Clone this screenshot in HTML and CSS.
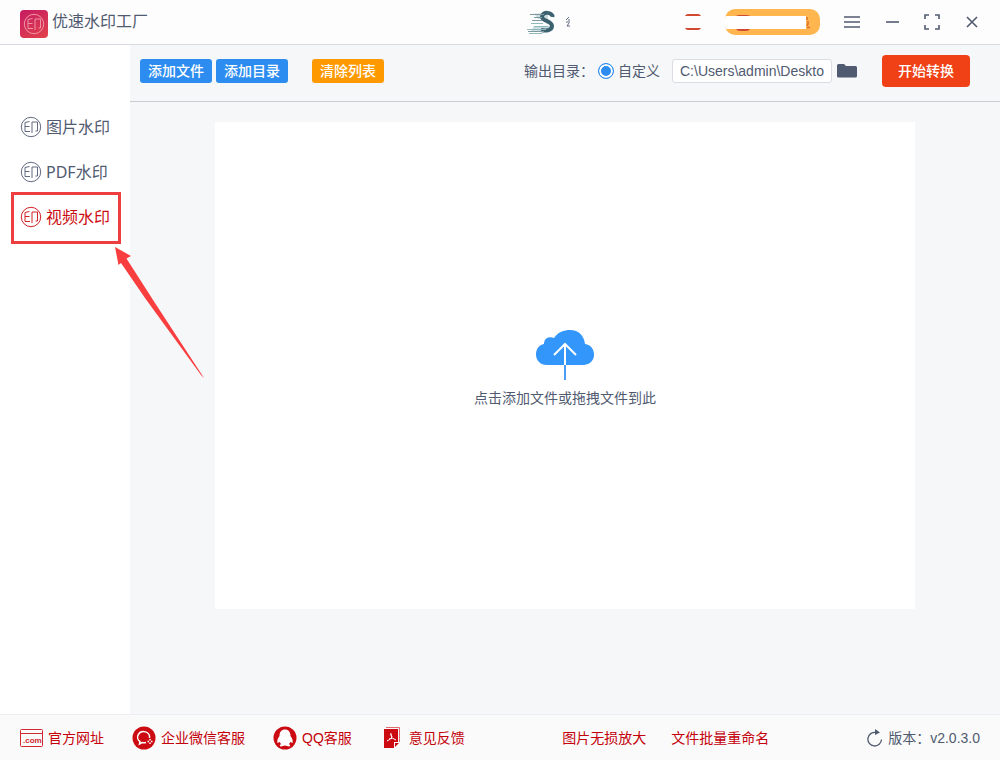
FILE: index.html
```
<!DOCTYPE html>
<html lang="zh-CN">
<head>
<meta charset="utf-8">
<meta name="viewport" content="width=device-width, initial-scale=1">
<title>优速水印工厂</title>
<link rel="stylesheet" href="styles.css">
</head>
<body>
<svg class="defs" aria-hidden="true">
  <symbol id="stamp" viewBox="0 0 22 22">
    <g fill="none" stroke="currentColor" stroke-width=".9">
      <circle cx="11" cy="11" r="9.700"/>
      <path d="M9.500 5.500 5 6.500V15.500H10M5 10.500H9.500M12 17V6H17.500V15H15.500"/>
    </g>
  </symbol>
</svg>
<div class="app">
  <header class="titlebar">
    <span class="logo"><svg viewBox="0 0 22 22"><use href="#stamp"/></svg></span>
    <h1 class="title">优速水印工厂</h1>
    <div class="account">
      <svg class="avatar" viewBox="0 0 30 24" aria-hidden="true">
        <path d="M8 3.500H22V9H12ZM8 16H24V21H5Z" fill="#a9c6ca" opacity=".6"/>
        <path d="M26.500 7C27 2 16 1 16 7c0 4 10 4 10 9 0 5-7 5-11 4" fill="none" stroke="#3c6270" stroke-width="4"/>
        <path d="M4 4.500H18M8 7.500H16M6 10.500H16M2 21.500H18" stroke="#7f98a2" stroke-width="1"/>
        <path d="M5 13.500H17M8 16.500H22M1 19.500H20M3 23.500H16" stroke="#8fb9bd" stroke-width="1"/>
      </svg>
      <svg class="fragment" viewBox="0 0 6 12" aria-hidden="true"><path d="M4 1 1 4M3 4H5M1 6H5M4 7 2 10H5" fill="none" stroke="#626b80"/></svg>
      <svg class="badge" viewBox="0 0 16 16" aria-hidden="true"><path d="M0 2Q1 0 3 0H13Q15 0 16 2ZM0 14H16Q15 16 13 16H3Q1 16 0 14Z" fill="#d14a30"/></svg>
      <button class="vip" type="button" aria-label="会员">
        <svg viewBox="0 0 95 26" aria-hidden="true">
          <path d="M11 7Q12 6 15 6H21Q24 6 25 7V20Q24 22 21 22H15Q12 22 11 20Z" fill="#d14a30"/>
          <path d="M0 7H81V20H0Z" fill="#fff"/>
          <path d="M82 8V11M83 12V15L82 17M82 18.500H85" fill="none" stroke="#e36c2f" stroke-width="1.500"/>
        </svg>
      </button>
    </div>
    <div class="window-buttons">
      <button type="button" aria-label="菜单"><svg viewBox="0 0 16 16"><path d="M0 3H16M0 8H16M0 13H16"/></svg></button>
      <button type="button" aria-label="最小化"><svg viewBox="0 0 16 16"><path d="M2 8H15"/></svg></button>
      <button type="button" aria-label="最大化"><svg viewBox="0 0 16 16"><path d="M1 5V1H5M11 1H15V5M15 11V15H11M5 15H1V11"/></svg></button>
      <button type="button" aria-label="关闭"><svg viewBox="0 0 16 16"><path d="M3 3 13 13M13 3 3 13"/></svg></button>
    </div>
  </header>

  <nav class="sidebar">
    <a class="nav-item" href="#image"><svg><use href="#stamp"/></svg>图片水印</a>
    <a class="nav-item" href="#pdf"><svg><use href="#stamp"/></svg>PDF水印</a>
    <a class="nav-item active" href="#video"><svg><use href="#stamp"/></svg>视频水印</a>
    <span class="highlight"></span>
    <svg class="arrow" viewBox="0 0 90 132" aria-hidden="true"><path d="M0 0 16 9 11.500 11.500 15 17 40 56 89 131 86 128 30 51 6 16 3.500 18Z" fill="#f93e40"/></svg>
  </nav>

  <main class="content">
    <div class="toolbar">
      <button class="btn blue" type="button">添加文件</button>
      <button class="btn blue" type="button">添加目录</button>
      <button class="btn orange" type="button">清除列表</button>
      <div class="output">
        <span class="output-label">输出目录：</span>
        <input class="radio" type="radio" id="custom" name="output" checked>
        <label for="custom">自定义</label>
        <input class="path" type="text" aria-label="输出路径" value="C:\Users\admin\Deskto">
        <button class="folder" type="button" aria-label="选择目录"><svg viewBox="0 0 20 14"><path d="M0 1.500Q0 0 1.500 0H7L9 2H18.500Q20 2 20 3.500V12Q20 13.500 18.500 13.500H1.500Q0 13.500 0 12Z" fill="#505a70"/></svg></button>
      </div>
      <button class="btn start" type="button">开始转换</button>
    </div>
    <button class="dropzone" type="button">
      <svg class="cloud" viewBox="0 0 58 50" aria-hidden="true">
        <path d="M11 35C4 35 0 30 0 24.500 0 19 3 15 8 14 8 9 12 6 18 8 22 2 28 0 34 0 43 0 48 6 49 14 55 15 58 19 58 25 58 31 53 35 47 35Z" fill="#3296fa"/>
        <path d="M29 35V50" stroke="#4a9df8" stroke-width="2"/>
        <path d="M29 35V14M18 25 29 14 40 25" fill="none" stroke="#fff" stroke-width="2"/>
      </svg>
      <span>点击添加文件或拖拽文件到此</span>
    </button>
  </main>

  <footer class="footer">
    <a class="site" href="#site"><svg class="com" viewBox="0 0 23 18" aria-hidden="true"><rect x=".5" y=".5" width="22" height="17" rx="1" fill="none" stroke="#d02a31"/><path d="M0 4.500H23" stroke="#d02a31"/><text x="3" y="14" font-size="8" font-weight="700" fill="#d02a31">.com</text></svg>官方网址</a>
    <a class="wechat" href="#wechat"><svg class="round" viewBox="0 0 24 24" aria-hidden="true"><circle cx="12" cy="12" r="11.500" fill="#cb0b11"/><path d="M17.500 12A6 5.500 0 1 0 8 15.500L7.500 18 10 16.500Q12 17 14 16.500" fill="none" stroke="#fff" stroke-width="1.500"/><path d="M18 13V14.500M18 16.500V18M15.500 15.500H17M19 15.500H20.500" stroke="#fff" stroke-width="1.500"/></svg>企业微信客服</a>
    <a class="qq" href="#qq"><svg class="round" viewBox="0 0 24 24" aria-hidden="true"><circle cx="12" cy="12" r="11.500" fill="#cb0b11"/><path d="M12 3.500C8.500 3.500 6.500 6 6.500 10Q3.500 14 4.500 17L6.500 16 8 18Q5.500 20 8 20.500L12 19.500 16 20.500Q18.500 20 16 18L17.500 16 19.500 17Q20.500 14 17.500 10C17.500 6 15.500 3.500 12 3.500Z" fill="#fff"/></svg>QQ客服</a>
    <a class="feedback" href="#feedback"><svg class="pdf" viewBox="0 0 17 22" aria-hidden="true"><path d="M0 2H14V15H10V21H0Z" fill="#cb0b11"/><path d="M2 .5H15.500V15" fill="none" stroke="#e06a6d"/><path d="M11 20V16H15Z" fill="#cb0b11"/><path d="M7 6Q6 7 8 10Q6 13 3 14M8 10Q7 9 7 7M5 12Q9 10 12 13" fill="none" stroke="#fff"/></svg>意见反馈</a>
    <a class="enlarge" href="#enlarge">图片无损放大</a>
    <a class="rename" href="#rename">文件批量重命名</a>
    <span class="version"><svg viewBox="0 0 16 18" aria-hidden="true"><path d="M9 3.500A6.800 6.800 0 1 0 14.500 10.500" fill="none" stroke="#505a70" stroke-width="1.300"/><path d="M8 0 13 3.500 8 6Z" fill="#505a70"/></svg><span>版本：v2.0.3.0</span></span>
  </footer>
</div>
</body>
</html>
```

FILE: styles.css
```
* {
  box-sizing: border-box;
}

body {
  margin: 0;
  color: #505a70;
  font: 14px/20px "Liberation Sans", "Noto Sans CJK SC", sans-serif;
}

button {
  padding: 0;
  border: 0;
  background: none;
  color: inherit;
  font: inherit;
}

a {
  color: inherit;
  text-decoration: none;
}

svg {
  display: block;
  flex: none;
}

.defs {
  position: absolute;
  width: 0;
  height: 0;
}

.app {
  display: grid;
  grid-template: 45px 1fr 46px / 130px 1fr;
  min-height: 100vh;
}

.titlebar {
  grid-column: 1 / -1;
  display: flex;
  align-items: center;
  padding: 0 20px;
  border-bottom: 1px solid #d7dae1;
  background: #fdfdfd;
}

.logo {
  display: grid;
  place-items: center;
  width: 28px;
  height: 28px;
  margin-top: 4px;
  border-radius: 4px;
  background: linear-gradient(150deg, #c51b62, #e3434c);
  color: #f3a0ae;
}

.logo svg {
  width: 22px;
  height: 22px;
}

.title {
  margin: 0 auto 0 4px;
  font-size: 16px;
  font-weight: 400;
}

.account {
  display: flex;
  align-items: center;
}

.avatar {
  width: 30px;
  height: 24px;
}

.fragment {
  width: 6px;
  height: 12px;
  margin-left: 9px;
}

.badge {
  width: 16px;
  height: 16px;
  margin-left: 114px;
}

.vip {
  width: 95px;
  height: 26px;
  margin: 0 24px;
  border-radius: 10px;
  background: #ffb64e;
  overflow: hidden;
}

.window-buttons {
  display: flex;
  gap: 24px;
}

.window-buttons svg {
  width: 16px;
  height: 16px;
  fill: none;
  stroke: #505a70;
  stroke-width: 1.6;
}

.sidebar {
  position: relative;
  padding-top: 59px;
  background: #fff;
}

.nav-item {
  display: flex;
  align-items: center;
  gap: 4px;
  height: 45px;
  padding-left: 20px;
  font-family: "Noto Sans", "Noto Sans CJK SC", sans-serif;
  font-size: 16px;
}

.nav-item svg {
  width: 22px;
  height: 22px;
}

.nav-item.active {
  color: #cb0b11;
}

.highlight {
  position: absolute;
  top: 147px;
  left: 11px;
  width: 110px;
  height: 52px;
  border: 3px solid #ee3e40;
}

.arrow {
  position: absolute;
  top: 202px;
  left: 115px;
  width: 90px;
  height: 132px;
  pointer-events: none;
}

.content {
  display: flex;
  flex-direction: column;
  background: #f5f7f9;
}

.toolbar {
  display: flex;
  align-items: center;
  height: 57px;
  padding: 0 30px 4px 10px;
  border-bottom: 1px solid #c9ccd2;
}

.btn {
  height: 24px;
  padding: 0 8px;
  margin-right: 4px;
  border-radius: 3px;
  color: #fff;
  font-weight: 500;
  white-space: nowrap;
}

.blue {
  background: #2d8cf0;
}

.orange {
  margin-left: 20px;
  background: #ff9900;
}

.btn.start {
  height: 32px;
  padding: 0 16px;
  margin: 0 0 0 25px;
  border-radius: 4px;
  background: #f04116;
}

.output {
  display: flex;
  align-items: center;
  margin-left: auto;
  white-space: nowrap;
}

.radio {
  appearance: none;
  width: 16px;
  height: 16px;
  margin: 0 4px;
  border: 1px solid #2d8cf0;
  border-radius: 50%;
  background: #2d8cf0;
  box-shadow: inset 0 0 0 2px #fff;
}

.path {
  width: 160px;
  height: 24px;
  margin: 0 5px 0 12px;
  padding: 0 7px;
  border: 1px solid #d9dce3;
  border-radius: 3px;
  background: #fff;
  color: inherit;
  font: inherit;
}

.folder svg {
  width: 20px;
  height: 14px;
}

.dropzone {
  flex: 1;
  display: flex;
  flex-direction: column;
  align-items: center;
  justify-content: center;
  gap: 8px;
  margin: 20px 85px 105px;
  padding-top: 6px;
  background: #fff;
}

.cloud {
  width: 58px;
  height: 50px;
}

.footer {
  grid-column: 1 / -1;
  display: flex;
  align-items: center;
  padding: 0 20px;
  border-top: 1px solid #eceef1;
  background: #fafafa;
  white-space: nowrap;
}

.footer a,
.version {
  display: flex;
  align-items: center;
  gap: 5px;
}

.footer a {
  margin-right: 28px;
  color: #c4000a;
}

.com {
  width: 23px;
  height: 18px;
}

.round {
  width: 24px;
  height: 24px;
}

.pdf {
  width: 17px;
  height: 22px;
}

.footer .feedback {
  gap: 8px;
  margin: 0 auto 0 4px;
}

.footer .enlarge {
  margin-right: 25px;
}

.footer .rename {
  margin-right: 98px;
}

.version svg {
  width: 16px;
  height: 18px;
}
```
